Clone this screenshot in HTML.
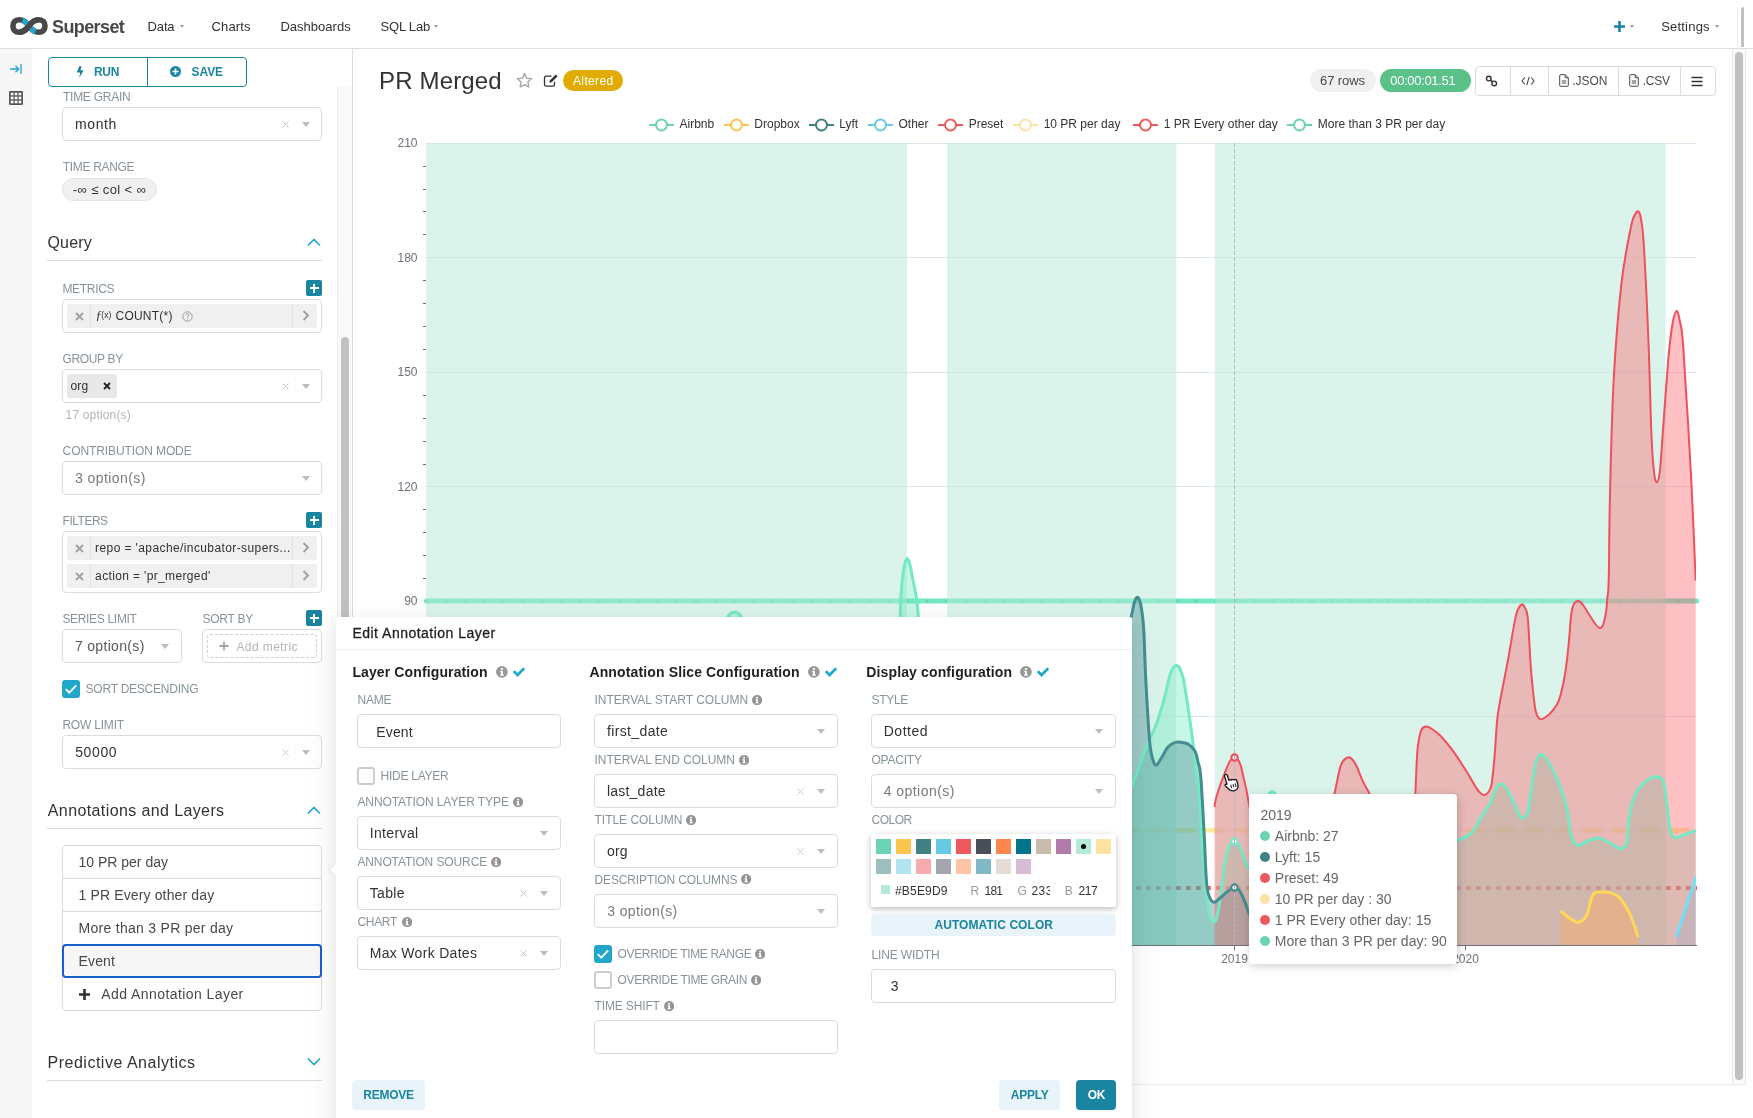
<!DOCTYPE html>
<html lang="en">
<head>
<meta charset="utf-8">
<title>Superset - PR Merged</title>
<style>
*{box-sizing:border-box;margin:0;padding:0}
html,body{width:1753px;height:1118px;overflow:hidden;background:#fff}
body{font-family:"Liberation Sans",sans-serif;color:#323232;position:relative;font-size:14px}
#app{position:absolute;left:0;top:0;width:1753px;height:1118px;overflow:hidden;will-change:transform}
.abs{position:absolute}
.t{position:absolute;white-space:nowrap;line-height:20px}
/* nav */
#nav{position:absolute;left:0;top:0;width:1753px;height:49px;background:#fff;border-bottom:1px solid #dedede}
#nav .t{font-size:14px;color:#323232;top:19px;letter-spacing:.25px}
.caret{position:absolute;width:0;height:0;border-left:2.8px solid transparent;border-right:2.8px solid transparent;border-top:3.4px solid #a0a0a0}
/* strip */
#strip{position:absolute;left:0;top:49px;width:32px;height:1069px;background:#f7f7f7}
/* sidebar */
#side{position:absolute;left:32px;top:49px;width:320px;height:1069px;background:#fff}
#vdiv{position:absolute;left:352px;top:49px;width:1px;height:1069px;background:#dcdcdc}
.lbl{position:absolute;white-space:nowrap;font-size:12px;line-height:1;color:#879399;letter-spacing:.35px;text-transform:uppercase}
.sel{position:absolute;border:1px solid #dcdcdc;border-radius:4px;background:#fff}
.sel .v{position:absolute;left:12px;top:0;height:100%;display:flex;align-items:center;font-size:14px;color:#323232;white-space:nowrap;letter-spacing:.3px}
.sel .ph{color:#808080}
.sel .arr{position:absolute;right:11px;top:50%;margin-top:-2px;width:0;height:0;border-left:4.5px solid transparent;border-right:4.5px solid transparent;border-top:5px solid #bdbdbd}
.sel .x{position:absolute;right:31px;top:50%;width:9px;height:9px;margin-top:-4px}
.sech{position:absolute;left:47px;font-size:16px;line-height:1;color:#323232;white-space:nowrap;letter-spacing:.35px}
.hr{position:absolute;left:47px;width:275px;height:1px;background:#dcdcdc}
.plus{position:absolute;width:15px;height:15px;border-radius:2px;background:#1a85a0}
.plus:before{content:"";position:absolute;left:3.5px;top:7.2px;width:9px;height:1.6px;background:#fff}
.plus:after{content:"";position:absolute;left:7.2px;top:3.5px;width:1.6px;height:9px;background:#fff}
.chip{position:absolute;left:67px;width:250px;height:24px;background:#f0f0f0;border-radius:3px}
.chip .cx{position:absolute;left:0;top:0;width:24px;height:24px;border-right:1px solid #e2e2e2}
.chip .cr{position:absolute;right:0;top:0;width:25px;height:24px;border-left:1px solid #e2e2e2}
.chip .ct{position:absolute;left:28px;top:0;height:23px;display:flex;align-items:center;font-size:12.5px;color:#323232;white-space:nowrap;letter-spacing:.3px}
.chk{position:absolute;width:17px;height:17px;border-radius:2px}
.chk.on{background:#1a85a0;border:1px solid #1a85a0}
.chk.off{background:#fff;border:1px solid #9e9e9e}
.li{position:absolute;left:62px;width:260px;height:34px;border:1px solid #dcdcdc;background:#fff;font-size:14.5px;color:#484848;padding-left:15px;display:flex;align-items:center;white-space:nowrap;letter-spacing:.3px}
</style>
</head>
<body>
<div id="app">
<!-- NAV -->
<div id="nav">
<svg class="abs" style="left:9px;top:16px" width="40" height="20" viewBox="0 0 40 20" fill="none" stroke-width="5.600">
<path d="M19.970 10C17.100 6 14.600 3.750 10.100 3.750C6.200 3.750 3.940 6.400 3.940 10C3.940 13.600 6.200 16.250 10.100 16.250C14.600 16.250 17.100 14 19.970 10C22.800 6 25.300 3.750 29.800 3.750C33.700 3.750 36 6.400 36 10C36 13.600 33.700 16.250 29.800 16.250C25.300 16.250 22.800 14 19.970 10Z" stroke="#484848"/>
<path d="M10.100 3.750C14.600 3.750 17.100 6 19.970 10C22.800 14 25.300 16.250 29.800 16.250" stroke="#20a7c9" pathLength="100" stroke-dasharray="0 14 72 14"/>
<path d="M10.100 16.250C14.600 16.250 17.100 14 19.970 10C22.800 6 25.300 3.750 29.800 3.750" stroke="#484848"/>
</svg>





<svg class="abs" style="left:1614px;top:21px" width="11" height="11" viewBox="0 0 11 11"><path d="M4.200 0h2.600v4.200H11v2.600H6.800V11H4.200V6.800H0V4.200h4.200z" fill="#1a85a0"/></svg>


<div class="abs" style="left:1737px;top:7px;width:1px;height:40px;background:#ececec"></div>
<div class="abs" style="left:1741px;top:7px;width:3px;height:40px;background:#c1c1c1;border-radius:3px 0 0 0"></div>
</div>
<!-- STRIP -->
<div id="strip">
<svg class="abs" style="left:9px;top:13px" width="14" height="14" viewBox="0 0 14 14" fill="none" stroke="#20a7c9" stroke-width="1.300"><path d="M1 7h8.500M6.500 3.800L9.700 7l-3.200 3.200M12 2v10"/></svg>
<svg class="abs" style="left:9px;top:42px" width="14" height="14" viewBox="0 0 14 14"><rect x="0" y="0" width="14" height="14" rx="1.200" fill="#555"/><g fill="#f7f7f7"><rect x="1.700" y="1.700" width="2.800" height="2.600"/><rect x="5.700" y="1.700" width="2.700" height="2.600"/><rect x="9.600" y="1.700" width="2.700" height="2.600"/><rect x="1.700" y="5.600" width="2.800" height="2.700"/><rect x="5.700" y="5.600" width="2.700" height="2.700"/><rect x="9.600" y="5.600" width="2.700" height="2.700"/><rect x="1.700" y="9.600" width="2.800" height="2.700"/><rect x="5.700" y="9.600" width="2.700" height="2.700"/><rect x="9.600" y="9.600" width="2.700" height="2.700"/></g></svg>
</div>

<div class="t" style="left:52px;top:17px;font-size:18px;font-weight:bold;color:#484848;letter-spacing:-0.604px;">Superset</div>
<div class="t" style="left:147.6px;top:17px;font-size:13px;color:#323232;letter-spacing:-0.167px;">Data</div>
<div class="t" style="left:211.6px;top:17px;font-size:13px;color:#323232;letter-spacing:0.101px;">Charts</div>
<div class="t" style="left:280.4px;top:17px;font-size:13px;color:#323232;letter-spacing:0.019px;">Dashboards</div>
<div class="t" style="left:380.5px;top:17px;font-size:13px;color:#323232;letter-spacing:-0.192px;">SQL Lab</div>
<div class="t" style="left:1661.2px;top:17px;font-size:13px;color:#323232;letter-spacing:0.202px;">Settings</div>
<div class="caret" style="left:179.7px;top:24.6px;border-top-color:#9a9a9a"></div>
<div class="caret" style="left:433.9px;top:24.6px;border-top-color:#9a9a9a"></div>
<div class="caret" style="left:1629.6px;top:24.6px;border-top-color:#9a9a9a"></div>
<div class="caret" style="left:1714.5px;top:24.6px;border-top-color:#9a9a9a"></div>
<div id="side"></div><div id="vdiv"></div>
<div class="abs" style="left:337px;top:87px;width:15px;height:1031px;background:#fafafa;border-left:1px solid #ececec"></div>
<div class="abs" style="left:341px;top:337px;width:8px;height:300px;background:#c1c1c1;border-radius:4px"></div>
<div class="abs" style="left:48px;top:57px;width:199px;height:30px;border:1px solid #1a85a0;border-radius:4px;background:#fff"></div><div class="abs" style="left:147px;top:57px;width:1px;height:30px;background:#1a85a0"></div>
<svg class="abs" style="left:76px;top:66px" width="8" height="12" viewBox="0 0 8 12"><path d="M3.200 0.300L5.600 0.300 4.500 4.300 7.600 4.300 3.300 11.800 4.100 6.600 0.800 6.600Z" fill="#1a85a0"/></svg>
<div class="t" style="left:94px;top:62px;font-size:12px;font-weight:bold;color:#1a85a0;letter-spacing:-0.333px;">RUN</div>
<svg class="abs" style="left:170px;top:66px" width="11" height="11" viewBox="0 0 11 11"><circle cx="5.500" cy="5.500" r="5.500" fill="#1a85a0"/><path d="M4.700 2.400h1.600v2.300h2.300v1.600H6.300v2.300H4.700V6.300H2.400V4.700h2.300z" fill="#fff"/></svg>
<div class="t" style="left:191.5px;top:62px;font-size:12px;font-weight:bold;color:#1a85a0;letter-spacing:-0.074px;">SAVE</div>
<div class="t" style="left:63px;top:87px;font-size:12px;color:#879399;letter-spacing:-0.262px;">TIME GRAIN</div>
<div class="sel" style="left:62px;top:107px;width:260px;height:34px"><div class="arr"></div><svg class="x" viewBox="0 0 9 9"><path d="M1.500 1.500l6 6M7.500 1.500l-6 6" stroke="#c8c8c8" stroke-width="1" fill="none"/></svg></div>
<div class="t" style="left:75px;top:114px;font-size:14px;color:#323232;letter-spacing:0.616px;">month</div>
<div class="t" style="left:62.8px;top:157px;font-size:12px;color:#879399;letter-spacing:-0.327px;">TIME RANGE</div>
<div class="abs" style="left:62px;top:178px;width:95px;height:23px;border-radius:12px;background:#f0f0f0;border:1px solid #e4e4e4"></div>
<div class="t" style="left:72.8px;top:180px;font-size:13px;font-family:'Liberation Sans','DejaVu Sans',sans-serif;color:#323232;letter-spacing:0.404px;">-∞ ≤ col &lt; ∞</div>
<div class="t" style="left:47.5px;top:233px;font-size:16px;color:#323232;letter-spacing:0.164px;">Query</div>
<svg class="abs" style="left:307px;top:238px" width="14" height="9" viewBox="0 0 14 9"><path d="M1 7.500L7 1.500l6 6" fill="none" stroke="#20a7c9" stroke-width="1.600"/></svg>
<div class="hr" style="top:260px"></div>
<div class="t" style="left:62.4px;top:279px;font-size:12px;color:#879399;letter-spacing:-0.3px;">METRICS</div>
<div class="plus" style="left:306px;top:280px;width:16px;height:16px"></div>
<div class="sel" style="left:62px;top:299px;width:260px;height:34px"></div>
<div class="chip" style="top:304px"><div class="cx"><svg class="abs" style="left:7.500px;top:7.500px" width="9" height="9" viewBox="0 0 9 9"><path d="M1 1l7 7M8 1l-7 7" stroke="#a0a0a0" stroke-width="1.800" fill="none"/></svg></div><div class="cr"><svg class="abs" style="left:8.500px;top:6px" width="8" height="11" viewBox="0 0 8 11"><path d="M1.500 1l4.500 4.500L1.500 10" stroke="#a0a0a0" stroke-width="1.900" fill="none"/></svg></div></div>
<div class="t" style="left:95.5px;top:305px;font-size:13px;color:#323232;font-style:italic;font-family:'Liberation Serif',serif;">ƒ</div>
<div class="t" style="left:101.3px;top:305px;font-size:8.5px;color:#323232;">(x)</div>
<div class="t" style="left:115.5px;top:306px;font-size:12px;color:#323232;letter-spacing:0.234px;">COUNT(*)</div>
<svg class="abs" style="left:182px;top:310.500px" width="11" height="11" viewBox="0 0 11 11"><circle cx="5.500" cy="5.500" r="4.700" fill="none" stroke="#9a9a9a" stroke-width="1"/><path d="M4 4.300c0-1 .7-1.500 1.500-1.500s1.500.5 1.500 1.300c0 1-1.400 1.100-1.400 2.300" fill="none" stroke="#9a9a9a" stroke-width="1"/><rect x="5" y="7.300" width="1.100" height="1.100" fill="#9a9a9a"/></svg>
<div class="t" style="left:62.4px;top:349px;font-size:12px;color:#879399;letter-spacing:-0.33px;">GROUP BY</div>
<div class="sel" style="left:62px;top:369px;width:260px;height:34px"><div class="arr"></div><svg class="x" viewBox="0 0 9 9"><path d="M1.500 1.500l6 6M7.500 1.500l-6 6" stroke="#c8c8c8" stroke-width="1" fill="none"/></svg></div>
<div class="abs" style="left:67px;top:374px;width:50px;height:24px;background:#e8e8e8;border-radius:2px"></div>
<div class="t" style="left:70.4px;top:376px;font-size:12px;color:#323232;letter-spacing:0.219px;">org</div>
<svg class="abs" style="left:103px;top:382px" width="8" height="8" viewBox="0 0 8 8"><path d="M1 1l6 6M7 1l-6 6" stroke="#222" stroke-width="1.800" fill="none"/></svg>
<div class="t" style="left:65.6px;top:405px;font-size:12px;color:#b4b4b4;letter-spacing:0.16px;">17 option(s)</div>
<div class="t" style="left:62.6px;top:441px;font-size:12px;color:#879399;letter-spacing:-0.098px;">CONTRIBUTION MODE</div>
<div class="sel" style="left:62px;top:461px;width:260px;height:34px"><div class="arr"></div></div>
<div class="t" style="left:75.1px;top:468px;font-size:14px;color:#7a7a7a;letter-spacing:0.413px;">3 option(s)</div>
<div class="t" style="left:62.6px;top:511px;font-size:12px;color:#879399;letter-spacing:-0.493px;">FILTERS</div>
<div class="plus" style="left:306px;top:512px;width:16px;height:16px"></div>
<div class="sel" style="left:62px;top:531px;width:260px;height:62px"></div>
<div class="chip" style="top:536px"><div class="cx"><svg class="abs" style="left:7.500px;top:7.500px" width="9" height="9" viewBox="0 0 9 9"><path d="M1 1l7 7M8 1l-7 7" stroke="#a0a0a0" stroke-width="1.800" fill="none"/></svg></div><div class="cr"><svg class="abs" style="left:8.500px;top:6px" width="8" height="11" viewBox="0 0 8 11"><path d="M1.500 1l4.500 4.500L1.500 10" stroke="#a0a0a0" stroke-width="1.900" fill="none"/></svg></div></div>
<div class="chip" style="top:564px"><div class="cx"><svg class="abs" style="left:7.500px;top:7.500px" width="9" height="9" viewBox="0 0 9 9"><path d="M1 1l7 7M8 1l-7 7" stroke="#a0a0a0" stroke-width="1.800" fill="none"/></svg></div><div class="cr"><svg class="abs" style="left:8.500px;top:6px" width="8" height="11" viewBox="0 0 8 11"><path d="M1.500 1l4.500 4.500L1.500 10" stroke="#a0a0a0" stroke-width="1.900" fill="none"/></svg></div></div>
<div class="t" style="left:95.1px;top:538px;font-size:12px;color:#323232;letter-spacing:0.398px;">repo = 'apache/incubator-supers...</div>
<div class="t" style="left:95.1px;top:566px;font-size:12px;color:#323232;letter-spacing:0.359px;">action = 'pr_merged'</div>
<div class="t" style="left:62.4px;top:609px;font-size:12px;color:#879399;letter-spacing:-0.319px;">SERIES LIMIT</div>
<div class="t" style="left:202.4px;top:609px;font-size:12px;color:#879399;letter-spacing:-0.25px;">SORT BY</div>
<div class="plus" style="left:306px;top:610px;width:16px;height:16px"></div>
<div class="sel" style="left:62px;top:629px;width:120px;height:34px"><div class="arr" style="right:12.500px"></div></div>
<div class="t" style="left:74.9px;top:636px;font-size:14px;color:#5a5a5a;letter-spacing:0.331px;">7 option(s)</div>
<div class="sel" style="left:202px;top:629px;width:120px;height:34px"></div>
<div class="abs" style="left:207px;top:634px;width:110px;height:24px;border:1px dashed #cfcfcf;border-radius:3px"></div>
<svg class="abs" style="left:219px;top:641px" width="10" height="10" viewBox="0 0 10 10"><path d="M5 0.500v9M0.500 5h9" stroke="#8a8a8a" stroke-width="1.300"/></svg>
<div class="t" style="left:236.4px;top:637px;font-size:12px;color:#b4b4b4;letter-spacing:0.424px;">Add metric</div>
<div class="abs" style="left:62px;top:680px;width:18px;height:18px;border-radius:3px;background:#20a7c9"><svg class="abs" style="left:0;top:0" width="18" height="18" viewBox="0 0 18 18"><path d="M3.800 9.200l3.500 3.500 6.900-7.400" fill="none" stroke="#fff" stroke-width="1.900"/></svg></div>
<div class="t" style="left:85.6px;top:679px;font-size:12px;color:#879399;letter-spacing:-0.237px;">SORT DESCENDING</div>
<div class="t" style="left:62.4px;top:715px;font-size:12px;color:#879399;letter-spacing:-0.203px;">ROW LIMIT</div>
<div class="sel" style="left:62px;top:735px;width:260px;height:34px"><div class="arr"></div><svg class="x" viewBox="0 0 9 9"><path d="M1.500 1.500l6 6M7.500 1.500l-6 6" stroke="#c8c8c8" stroke-width="1" fill="none"/></svg></div>
<div class="t" style="left:75.2px;top:742px;font-size:14px;color:#323232;letter-spacing:0.633px;">50000</div>
<div class="t" style="left:47.8px;top:801px;font-size:16px;color:#323232;letter-spacing:0.39px;">Annotations and Layers</div>
<svg class="abs" style="left:307px;top:806px" width="14" height="9" viewBox="0 0 14 9"><path d="M1 7.500L7 1.500l6 6" fill="none" stroke="#20a7c9" stroke-width="1.600"/></svg>
<div class="hr" style="top:828px"></div>
<div class="abs" style="left:62px;top:845px;width:260px;height:166px;border:1px solid #dcdcdc;border-radius:4px;background:#fff"></div>
<div class="abs" style="left:62px;top:878px;width:260px;height:1px;background:#dcdcdc"></div>
<div class="abs" style="left:62px;top:911px;width:260px;height:1px;background:#dcdcdc"></div>
<div class="abs" style="left:62px;top:944px;width:260px;height:34px;border:2px solid #1a5fd0;border-radius:4px;background:#f7f7f7"></div>
<div class="t" style="left:78.5px;top:852px;font-size:14px;color:#484848;letter-spacing:0px;">10 PR per day</div>
<div class="t" style="left:78.5px;top:885px;font-size:14px;color:#484848;letter-spacing:0.137px;">1 PR Every other day</div>
<div class="t" style="left:78.5px;top:918px;font-size:14px;color:#484848;letter-spacing:0.285px;">More than 3 PR per day</div>
<div class="t" style="left:78.5px;top:951px;font-size:14px;color:#484848;letter-spacing:0.158px;">Event</div>
<svg class="abs" style="left:78.500px;top:988.500px" width="11" height="11" viewBox="0 0 11 11"><path d="M4.200 0h2.600v4.200H11v2.600H6.800V11H4.200V6.800H0V4.200h4.200z" fill="#323232"/></svg>
<div class="t" style="left:101.3px;top:984px;font-size:14px;color:#484848;letter-spacing:0.425px;">Add Annotation Layer</div>
<div class="t" style="left:47.5px;top:1053px;font-size:16px;color:#323232;letter-spacing:0.508px;">Predictive Analytics</div>
<svg class="abs" style="left:307px;top:1057px" width="14" height="9" viewBox="0 0 14 9"><path d="M1 1.500l6 6 6-6" fill="none" stroke="#20a7c9" stroke-width="1.600"/></svg>
<div class="hr" style="top:1080px"></div>
<svg class="abs" style="left:0;top:0" width="1753" height="1118" viewBox="0 0 1753 1118" font-family="'Liberation Sans',sans-serif" font-size="12">
<defs><clipPath id="plot"><rect x="426" y="100" width="1270" height="846"/></clipPath></defs>
<path d="M426 143.5H1696" stroke="#e0e6f1" stroke-width="1" fill="none"/>
<path d="M426 257.5H1696" stroke="#e0e6f1" stroke-width="1" fill="none"/>
<path d="M426 372.5H1696" stroke="#e0e6f1" stroke-width="1" fill="none"/>
<path d="M426 486.5H1696" stroke="#e0e6f1" stroke-width="1" fill="none"/>
<path d="M426 601.5H1696" stroke="#e0e6f1" stroke-width="1" fill="none"/>
<path d="M426 716.5H1696" stroke="#e0e6f1" stroke-width="1" fill="none"/>
<path d="M426 830.5H1696" stroke="#e0e6f1" stroke-width="1" fill="none"/>
<path d="M421.800 830.2H1697" stroke="#fdeea2" stroke-width="5" stroke-dasharray="20 9" fill="none" clip-path="url(#plot)"/>
<path d="M426 888.0H1697" stroke="#ee5960" stroke-width="4.200" stroke-dasharray="4.800 5.200" fill="none"/>
<path d="M426.500 600.9H1696.500" stroke="#75e8c4" stroke-width="5" fill="none" stroke-linecap="round"/>
<path d="M426.500 600.9H1697" stroke="#3fae8c" stroke-opacity="0.28" stroke-width="3.400" stroke-dasharray="0 19.250" fill="none" stroke-linecap="round"/>
<rect x="426" y="143" width="481" height="802" fill="#b5e9d9" fill-opacity="0.5"/>
<rect x="947" y="143" width="229.2" height="802" fill="#b5e9d9" fill-opacity="0.5"/>
<rect x="1215" y="143" width="450.7" height="802" fill="#b5e9d9" fill-opacity="0.5"/>
<g clip-path="url(#plot)">
<path d="M697.0 655.0C700.2 653.8 711.7 652.2 716.0 648.0C720.3 643.8 721.1 635.1 723.0 630.0C724.9 624.9 726.2 620.3 727.5 617.5C728.8 614.7 729.8 614.2 731.0 613.3C732.2 612.4 733.8 612.0 735.0 612.0C736.2 612.0 737.4 612.4 738.5 613.3C739.6 614.2 740.2 614.7 741.5 617.5C742.8 620.3 743.9 624.9 746.0 630.0C748.1 635.1 749.5 643.8 754.0 648.0C758.5 652.2 769.8 653.8 773.0 655.0L773.0 945L697.0 945Z" fill="#75e8c4" fill-opacity="0.4"/>
<path d="M880.0 655.0C883.1 654.2 895.4 656.3 898.8 650.0C902.2 643.7 899.9 625.3 900.2 617.0C900.5 608.7 900.3 606.5 900.7 600.0C901.1 593.5 901.8 584.1 902.5 578.0C903.2 571.9 904.0 566.8 904.8 563.5C905.6 560.2 906.4 558.5 907.2 558.5C908.0 558.5 908.8 560.8 909.6 563.5C910.4 566.2 910.8 568.9 912.0 575.0C913.2 581.1 915.8 593.0 916.8 600.0C917.8 607.0 917.8 608.7 918.3 617.0C918.8 625.3 916.2 643.7 919.5 650.0C922.8 656.3 934.9 654.2 938.0 655.0L938.0 945L880.0 945Z" fill="#75e8c4" fill-opacity="0.4"/>
<path d="M1113.0 830.0C1115.2 825.0 1122.8 807.2 1126.0 800.0C1129.2 792.8 1128.9 794.9 1132.0 786.7C1135.1 778.5 1140.6 761.5 1144.7 751.0C1148.8 740.5 1153.2 732.5 1156.5 723.7C1159.8 714.9 1162.2 706.1 1164.4 698.0C1166.7 689.9 1168.7 679.8 1170.0 675.0C1171.3 670.2 1171.5 670.9 1172.2 669.5C1172.9 668.1 1173.6 667.1 1174.3 666.5C1175.0 665.9 1175.8 665.5 1176.6 665.6C1177.4 665.7 1178.2 665.9 1179.0 667.0C1179.8 668.1 1180.5 669.5 1181.3 672.0C1182.1 674.5 1182.7 675.0 1184.0 682.0C1185.3 689.0 1187.5 703.8 1189.0 714.0C1190.5 724.2 1191.7 732.5 1193.0 743.0C1194.3 753.5 1195.8 767.5 1196.9 777.0C1198.0 786.5 1199.0 791.0 1199.8 800.0C1200.6 809.0 1200.5 815.9 1201.5 831.0C1202.5 846.1 1204.5 877.2 1205.7 890.4C1206.9 903.6 1207.6 905.3 1208.5 910.0C1209.4 914.7 1210.0 916.5 1211.0 918.5C1212.0 920.5 1213.2 922.1 1214.2 921.9C1215.2 921.6 1216.0 920.8 1217.0 917.0C1218.0 913.2 1218.7 908.2 1220.1 899.0C1221.5 889.8 1223.6 870.3 1225.2 861.5C1226.8 852.7 1227.9 849.4 1229.5 846.0C1231.1 842.6 1232.9 841.2 1234.6 841.2C1236.3 841.2 1238.0 843.2 1239.5 846.0C1241.0 848.8 1242.4 854.3 1243.9 858.0C1245.4 861.7 1247.0 867.0 1248.5 868.3C1250.0 869.6 1251.4 869.0 1253.0 866.0C1254.6 863.0 1256.0 860.2 1258.0 850.0C1260.0 839.8 1262.6 814.7 1265.0 805.0C1267.4 795.3 1269.7 791.6 1272.2 791.6C1274.7 791.6 1277.0 795.3 1280.0 805.0C1283.0 814.7 1285.0 837.5 1290.0 850.0C1295.0 862.5 1300.0 878.0 1310.0 880.0C1320.0 882.0 1335.0 866.7 1350.0 862.0C1365.0 857.3 1385.0 854.7 1400.0 852.0C1415.0 849.3 1430.5 847.9 1440.0 846.0C1449.5 844.1 1452.0 842.9 1457.3 840.7C1462.6 838.5 1467.7 836.3 1471.6 832.6C1475.5 828.9 1477.5 823.1 1480.5 818.3C1483.5 813.5 1486.8 809.1 1489.5 804.0C1492.2 798.9 1494.4 791.2 1496.6 787.9C1498.8 784.6 1500.5 782.8 1502.9 784.3C1505.3 785.8 1508.5 792.0 1511.0 796.8C1513.5 801.6 1516.2 809.4 1518.1 813.0C1520.0 816.6 1520.9 818.6 1522.6 818.3C1524.2 818.0 1526.5 816.1 1528.0 811.0C1529.5 805.9 1530.5 794.7 1531.5 787.9C1532.5 781.1 1533.2 775.0 1534.2 770.0C1535.2 765.0 1536.2 760.6 1537.5 758.0C1538.8 755.4 1540.1 753.9 1541.7 754.2C1543.3 754.5 1545.2 757.4 1547.0 760.0C1548.8 762.6 1550.4 765.3 1552.7 770.0C1555.0 774.7 1558.3 781.4 1560.7 788.0C1563.1 794.6 1565.3 802.0 1567.0 809.4C1568.7 816.8 1569.4 827.2 1570.6 832.6C1571.8 838.0 1572.7 839.9 1574.0 842.0C1575.3 844.1 1576.3 845.4 1578.6 845.2C1580.9 845.0 1584.7 842.2 1588.0 841.0C1591.3 839.8 1594.8 837.8 1598.3 838.0C1601.8 838.2 1605.4 840.7 1609.0 842.5C1612.6 844.3 1617.3 848.0 1619.8 848.7C1622.3 849.5 1622.8 848.2 1624.0 847.0C1625.2 845.8 1626.1 847.0 1627.0 841.6C1627.9 836.2 1628.1 822.8 1629.6 814.7C1631.1 806.7 1633.1 799.0 1635.9 793.3C1638.7 787.6 1643.0 783.5 1646.6 780.7C1650.2 778.0 1654.6 776.5 1657.4 776.8C1660.2 777.1 1662.0 777.7 1663.6 782.5C1665.2 787.3 1666.2 798.0 1667.2 805.8C1668.2 813.5 1669.0 824.0 1669.9 829.0C1670.8 834.0 1671.5 834.5 1672.5 836.0C1673.5 837.5 1673.7 838.1 1676.2 837.7C1678.8 837.3 1684.5 834.7 1687.8 833.5C1691.1 832.3 1694.6 831.0 1695.9 830.5L1695.9 945L1113.0 945Z" fill="#75e8c4" fill-opacity="0.4"/>
<path d="M1560.7 911.0C1561.9 912.0 1565.6 915.2 1568.0 917.0C1570.4 918.8 1573.1 920.7 1575.0 921.5C1576.9 922.3 1578.0 922.4 1579.5 922.0C1581.0 921.6 1582.7 920.5 1584.0 919.0C1585.3 917.5 1586.4 916.4 1587.6 913.0C1588.8 909.6 1590.2 902.1 1591.2 898.9C1592.2 895.7 1592.6 895.1 1593.5 894.0C1594.4 892.9 1594.9 892.5 1596.5 892.2C1598.1 891.9 1600.9 891.9 1603.0 892.0C1605.1 892.1 1607.1 892.2 1609.0 892.6C1610.9 893.0 1612.7 893.6 1614.5 894.5C1616.3 895.4 1617.4 895.2 1619.8 898.0C1622.2 900.8 1626.2 906.5 1628.7 911.4C1631.2 916.3 1633.5 923.2 1635.0 927.5C1636.5 931.8 1637.5 935.7 1638.0 937.3L1638.0 945L1560.7 945Z" fill="#ffd858" fill-opacity="0.4"/>
<path d="M1118.0 700.0C1119.3 690.0 1123.7 654.4 1126.0 640.0C1128.3 625.6 1130.6 619.8 1132.0 613.5C1133.4 607.2 1133.5 604.7 1134.5 602.0C1135.5 599.3 1136.7 596.6 1137.8 597.3C1138.9 598.0 1140.0 600.7 1141.0 606.0C1142.0 611.3 1142.9 617.0 1143.7 629.0C1144.5 641.0 1144.7 659.3 1145.7 678.0C1146.7 696.7 1148.4 727.3 1149.6 741.0C1150.8 754.7 1151.8 756.0 1153.0 760.0C1154.2 764.0 1155.0 765.5 1156.5 765.0C1158.0 764.5 1160.1 760.0 1162.0 757.0C1163.9 754.0 1165.8 749.4 1168.0 747.0C1170.2 744.6 1172.9 743.1 1175.2 742.4C1177.5 741.6 1179.9 742.2 1182.0 742.5C1184.1 742.8 1185.8 742.6 1188.0 744.0C1190.2 745.4 1193.2 748.0 1194.9 751.0C1196.6 754.0 1197.0 757.7 1198.0 762.0C1199.0 766.3 1199.8 765.5 1200.8 777.0C1201.8 788.5 1203.0 813.5 1204.0 831.0C1205.0 848.5 1205.6 871.0 1206.5 882.0C1207.4 893.0 1208.2 893.6 1209.5 897.0C1210.8 900.4 1212.5 902.1 1214.2 902.3C1216.0 902.5 1217.9 899.7 1220.0 898.0C1222.1 896.3 1224.6 893.8 1227.0 892.0C1229.4 890.2 1232.7 887.8 1234.6 887.4C1236.5 887.0 1237.2 888.1 1238.5 889.5C1239.8 890.9 1240.5 891.8 1242.2 895.5C1243.9 899.2 1246.7 906.8 1248.5 911.7C1250.3 916.6 1251.1 920.3 1253.0 925.0C1254.9 929.7 1256.8 936.7 1260.0 940.0C1263.2 943.3 1270.0 944.2 1272.0 945.0L1272.0 945L1118.0 945Z" fill="#468d91" fill-opacity="0.4"/>
<path d="M1676.2 937.3C1679.5 927.2 1692.6 886.9 1695.9 876.8L1695.9 945L1676.2 945Z" fill="#70dff8" fill-opacity="0.4"/>
<path d="M1214.5 807.0C1214.7 805.8 1214.8 803.3 1215.6 800.0C1216.4 796.7 1218.1 791.2 1219.5 787.0C1220.9 782.8 1222.8 778.2 1224.2 774.5C1225.6 770.8 1227.0 767.2 1228.1 764.7C1229.2 762.2 1230.0 760.8 1231.0 759.5C1232.0 758.2 1233.2 757.1 1234.3 757.0C1235.4 756.9 1236.5 757.7 1237.5 759.0C1238.5 760.3 1239.5 762.1 1240.4 764.7C1241.3 767.3 1242.0 770.6 1242.9 774.5C1243.8 778.4 1245.1 783.8 1246.0 788.0C1246.9 792.2 1247.3 794.7 1248.3 800.0C1249.3 805.3 1249.7 808.3 1252.0 820.0C1254.3 831.7 1258.5 856.7 1262.0 870.0C1265.5 883.3 1268.0 894.2 1273.0 900.0C1278.0 905.8 1285.7 908.3 1292.0 905.0C1298.3 901.7 1305.5 891.7 1311.0 880.0C1316.5 868.3 1321.1 849.4 1325.0 835.0C1328.9 820.6 1332.0 805.0 1334.5 793.7C1337.0 782.4 1338.6 772.9 1340.2 767.3C1341.8 761.7 1342.6 761.7 1344.0 760.0C1345.4 758.3 1347.3 757.2 1348.8 757.2C1350.3 757.2 1351.8 758.6 1353.2 760.3C1354.6 762.0 1355.8 764.4 1357.2 767.5C1358.6 770.6 1360.3 775.5 1361.7 778.7C1363.1 781.9 1364.3 784.0 1365.6 786.5C1366.9 789.0 1367.9 790.5 1369.5 793.7C1371.1 797.0 1372.8 799.1 1375.0 806.0C1377.2 812.9 1380.2 824.3 1383.0 835.0C1385.8 845.7 1388.3 862.5 1392.0 870.0C1395.7 877.5 1401.7 883.3 1405.0 880.0C1408.3 876.7 1410.3 864.4 1412.0 850.0C1413.7 835.6 1414.4 810.4 1415.3 793.7C1416.2 777.0 1416.5 760.5 1417.5 750.0C1418.5 739.5 1419.6 734.7 1421.0 730.8C1422.4 726.9 1424.2 726.8 1426.0 726.5C1427.8 726.2 1429.6 727.5 1432.0 729.0C1434.4 730.5 1436.9 732.1 1440.4 735.8C1443.9 739.5 1449.0 745.7 1453.1 751.2C1457.2 756.7 1461.0 762.8 1465.0 769.0C1469.0 775.2 1474.1 784.5 1476.8 788.6C1479.5 792.7 1479.7 792.4 1481.0 793.5C1482.3 794.6 1483.4 795.2 1484.6 795.0C1485.8 794.8 1486.8 794.2 1488.0 792.5C1489.2 790.8 1490.4 790.6 1491.5 784.7C1492.6 778.8 1493.5 768.1 1494.5 757.0C1495.5 745.9 1496.2 728.3 1497.4 717.8C1498.6 707.3 1499.6 703.9 1501.4 694.0C1503.2 684.1 1505.9 671.1 1508.2 658.7C1510.5 646.3 1513.4 627.8 1515.1 619.4C1516.8 611.0 1517.3 611.0 1518.5 608.5C1519.7 606.0 1520.9 604.7 1522.0 604.6C1523.1 604.5 1524.0 605.5 1525.0 608.0C1526.0 610.5 1526.9 609.3 1527.9 619.4C1528.9 629.5 1529.8 654.2 1530.9 668.6C1532.1 683.0 1533.7 698.1 1534.8 706.0C1535.9 713.9 1536.5 713.8 1537.5 716.0C1538.5 718.2 1539.5 719.0 1540.7 719.3C1542.0 719.5 1543.2 718.7 1545.0 717.5C1546.8 716.3 1549.2 714.8 1551.5 711.9C1553.8 709.0 1556.7 706.5 1559.0 700.0C1561.3 693.5 1563.6 682.6 1565.2 673.0C1566.8 663.4 1567.8 652.7 1568.8 642.6C1569.8 632.5 1570.5 618.8 1571.5 612.2C1572.5 605.6 1573.3 604.9 1574.5 603.0C1575.7 601.1 1577.2 600.7 1578.6 601.0C1580.0 601.3 1581.2 602.7 1583.0 605.0C1584.8 607.3 1587.4 611.9 1589.4 615.0C1591.4 618.1 1593.3 621.3 1595.0 623.5C1596.7 625.7 1598.5 627.6 1599.8 628.0C1601.0 628.4 1601.7 627.4 1602.5 626.0C1603.3 624.6 1604.0 622.1 1604.6 619.4C1605.2 616.7 1605.8 613.6 1606.3 610.0C1606.8 606.4 1606.9 603.0 1607.3 598.0C1607.7 593.0 1608.2 597.9 1608.7 580.0C1609.2 562.1 1609.2 524.2 1610.1 490.5C1610.9 456.8 1611.9 412.2 1613.8 377.8C1615.7 343.4 1618.6 308.9 1621.4 283.9C1624.2 258.9 1628.5 239.2 1630.8 227.6C1633.1 216.0 1633.8 217.2 1635.0 214.5C1636.2 211.8 1637.3 210.7 1638.3 211.4C1639.3 212.2 1640.1 213.2 1641.0 219.0C1641.9 224.8 1642.7 226.1 1643.9 246.3C1645.1 266.5 1647.2 308.9 1648.4 340.2C1649.7 371.5 1650.5 412.0 1651.4 434.0C1652.3 456.0 1653.1 464.0 1654.0 472.0C1654.9 480.0 1656.0 482.5 1657.0 482.2C1658.0 481.9 1659.0 478.0 1660.0 470.0C1661.0 462.0 1661.3 452.5 1662.7 434.0C1664.1 415.5 1666.7 377.3 1668.3 359.0C1669.9 340.7 1671.1 332.0 1672.5 324.0C1673.9 316.0 1675.3 311.3 1676.6 311.0C1677.8 310.7 1678.9 315.9 1680.0 322.0C1681.1 328.1 1681.5 322.8 1683.3 347.7C1685.1 372.6 1688.7 432.9 1690.8 471.7C1692.9 510.5 1694.9 562.5 1695.7 580.6L1695.7 945L1214.5 945Z" fill="#ff6169" fill-opacity="0.4"/>
<path d="M697.0 655.0C700.2 653.8 711.7 652.2 716.0 648.0C720.3 643.8 721.1 635.1 723.0 630.0C724.9 624.9 726.2 620.3 727.5 617.5C728.8 614.7 729.8 614.2 731.0 613.3C732.2 612.4 733.8 612.0 735.0 612.0C736.2 612.0 737.4 612.4 738.5 613.3C739.6 614.2 740.2 614.7 741.5 617.5C742.8 620.3 743.9 624.9 746.0 630.0C748.1 635.1 749.5 643.8 754.0 648.0C758.5 652.2 769.8 653.8 773.0 655.0" fill="none" stroke="#75e8c4" stroke-width="3" stroke-linejoin="round"/>
<path d="M880.0 655.0C883.1 654.2 895.4 656.3 898.8 650.0C902.2 643.7 899.9 625.3 900.2 617.0C900.5 608.7 900.3 606.5 900.7 600.0C901.1 593.5 901.8 584.1 902.5 578.0C903.2 571.9 904.0 566.8 904.8 563.5C905.6 560.2 906.4 558.5 907.2 558.5C908.0 558.5 908.8 560.8 909.6 563.5C910.4 566.2 910.8 568.9 912.0 575.0C913.2 581.1 915.8 593.0 916.8 600.0C917.8 607.0 917.8 608.7 918.3 617.0C918.8 625.3 916.2 643.7 919.5 650.0C922.8 656.3 934.9 654.2 938.0 655.0" fill="none" stroke="#75e8c4" stroke-width="3" stroke-linejoin="round"/>
<path d="M1113.0 830.0C1115.2 825.0 1122.8 807.2 1126.0 800.0C1129.2 792.8 1128.9 794.9 1132.0 786.7C1135.1 778.5 1140.6 761.5 1144.7 751.0C1148.8 740.5 1153.2 732.5 1156.5 723.7C1159.8 714.9 1162.2 706.1 1164.4 698.0C1166.7 689.9 1168.7 679.8 1170.0 675.0C1171.3 670.2 1171.5 670.9 1172.2 669.5C1172.9 668.1 1173.6 667.1 1174.3 666.5C1175.0 665.9 1175.8 665.5 1176.6 665.6C1177.4 665.7 1178.2 665.9 1179.0 667.0C1179.8 668.1 1180.5 669.5 1181.3 672.0C1182.1 674.5 1182.7 675.0 1184.0 682.0C1185.3 689.0 1187.5 703.8 1189.0 714.0C1190.5 724.2 1191.7 732.5 1193.0 743.0C1194.3 753.5 1195.8 767.5 1196.9 777.0C1198.0 786.5 1199.0 791.0 1199.8 800.0C1200.6 809.0 1200.5 815.9 1201.5 831.0C1202.5 846.1 1204.5 877.2 1205.7 890.4C1206.9 903.6 1207.6 905.3 1208.5 910.0C1209.4 914.7 1210.0 916.5 1211.0 918.5C1212.0 920.5 1213.2 922.1 1214.2 921.9C1215.2 921.6 1216.0 920.8 1217.0 917.0C1218.0 913.2 1218.7 908.2 1220.1 899.0C1221.5 889.8 1223.6 870.3 1225.2 861.5C1226.8 852.7 1227.9 849.4 1229.5 846.0C1231.1 842.6 1232.9 841.2 1234.6 841.2C1236.3 841.2 1238.0 843.2 1239.5 846.0C1241.0 848.8 1242.4 854.3 1243.9 858.0C1245.4 861.7 1247.0 867.0 1248.5 868.3C1250.0 869.6 1251.4 869.0 1253.0 866.0C1254.6 863.0 1256.0 860.2 1258.0 850.0C1260.0 839.8 1262.6 814.7 1265.0 805.0C1267.4 795.3 1269.7 791.6 1272.2 791.6C1274.7 791.6 1277.0 795.3 1280.0 805.0C1283.0 814.7 1285.0 837.5 1290.0 850.0C1295.0 862.5 1300.0 878.0 1310.0 880.0C1320.0 882.0 1335.0 866.7 1350.0 862.0C1365.0 857.3 1385.0 854.7 1400.0 852.0C1415.0 849.3 1430.5 847.9 1440.0 846.0C1449.5 844.1 1452.0 842.9 1457.3 840.7C1462.6 838.5 1467.7 836.3 1471.6 832.6C1475.5 828.9 1477.5 823.1 1480.5 818.3C1483.5 813.5 1486.8 809.1 1489.5 804.0C1492.2 798.9 1494.4 791.2 1496.6 787.9C1498.8 784.6 1500.5 782.8 1502.9 784.3C1505.3 785.8 1508.5 792.0 1511.0 796.8C1513.5 801.6 1516.2 809.4 1518.1 813.0C1520.0 816.6 1520.9 818.6 1522.6 818.3C1524.2 818.0 1526.5 816.1 1528.0 811.0C1529.5 805.9 1530.5 794.7 1531.5 787.9C1532.5 781.1 1533.2 775.0 1534.2 770.0C1535.2 765.0 1536.2 760.6 1537.5 758.0C1538.8 755.4 1540.1 753.9 1541.7 754.2C1543.3 754.5 1545.2 757.4 1547.0 760.0C1548.8 762.6 1550.4 765.3 1552.7 770.0C1555.0 774.7 1558.3 781.4 1560.7 788.0C1563.1 794.6 1565.3 802.0 1567.0 809.4C1568.7 816.8 1569.4 827.2 1570.6 832.6C1571.8 838.0 1572.7 839.9 1574.0 842.0C1575.3 844.1 1576.3 845.4 1578.6 845.2C1580.9 845.0 1584.7 842.2 1588.0 841.0C1591.3 839.8 1594.8 837.8 1598.3 838.0C1601.8 838.2 1605.4 840.7 1609.0 842.5C1612.6 844.3 1617.3 848.0 1619.8 848.7C1622.3 849.5 1622.8 848.2 1624.0 847.0C1625.2 845.8 1626.1 847.0 1627.0 841.6C1627.9 836.2 1628.1 822.8 1629.6 814.7C1631.1 806.7 1633.1 799.0 1635.9 793.3C1638.7 787.6 1643.0 783.5 1646.6 780.7C1650.2 778.0 1654.6 776.5 1657.4 776.8C1660.2 777.1 1662.0 777.7 1663.6 782.5C1665.2 787.3 1666.2 798.0 1667.2 805.8C1668.2 813.5 1669.0 824.0 1669.9 829.0C1670.8 834.0 1671.5 834.5 1672.5 836.0C1673.5 837.5 1673.7 838.1 1676.2 837.7C1678.8 837.3 1684.5 834.7 1687.8 833.5C1691.1 832.3 1694.6 831.0 1695.9 830.5" fill="none" stroke="#75e8c4" stroke-width="3" stroke-linejoin="round"/>
<path d="M1560.7 911.0C1561.9 912.0 1565.6 915.2 1568.0 917.0C1570.4 918.8 1573.1 920.7 1575.0 921.5C1576.9 922.3 1578.0 922.4 1579.5 922.0C1581.0 921.6 1582.7 920.5 1584.0 919.0C1585.3 917.5 1586.4 916.4 1587.6 913.0C1588.8 909.6 1590.2 902.1 1591.2 898.9C1592.2 895.7 1592.6 895.1 1593.5 894.0C1594.4 892.9 1594.9 892.5 1596.5 892.2C1598.1 891.9 1600.9 891.9 1603.0 892.0C1605.1 892.1 1607.1 892.2 1609.0 892.6C1610.9 893.0 1612.7 893.6 1614.5 894.5C1616.3 895.4 1617.4 895.2 1619.8 898.0C1622.2 900.8 1626.2 906.5 1628.7 911.4C1631.2 916.3 1633.5 923.2 1635.0 927.5C1636.5 931.8 1637.5 935.7 1638.0 937.3" fill="none" stroke="#ffd858" stroke-width="3" stroke-linejoin="round"/>
<path d="M1118.0 700.0C1119.3 690.0 1123.7 654.4 1126.0 640.0C1128.3 625.6 1130.6 619.8 1132.0 613.5C1133.4 607.2 1133.5 604.7 1134.5 602.0C1135.5 599.3 1136.7 596.6 1137.8 597.3C1138.9 598.0 1140.0 600.7 1141.0 606.0C1142.0 611.3 1142.9 617.0 1143.7 629.0C1144.5 641.0 1144.7 659.3 1145.7 678.0C1146.7 696.7 1148.4 727.3 1149.6 741.0C1150.8 754.7 1151.8 756.0 1153.0 760.0C1154.2 764.0 1155.0 765.5 1156.5 765.0C1158.0 764.5 1160.1 760.0 1162.0 757.0C1163.9 754.0 1165.8 749.4 1168.0 747.0C1170.2 744.6 1172.9 743.1 1175.2 742.4C1177.5 741.6 1179.9 742.2 1182.0 742.5C1184.1 742.8 1185.8 742.6 1188.0 744.0C1190.2 745.4 1193.2 748.0 1194.9 751.0C1196.6 754.0 1197.0 757.7 1198.0 762.0C1199.0 766.3 1199.8 765.5 1200.8 777.0C1201.8 788.5 1203.0 813.5 1204.0 831.0C1205.0 848.5 1205.6 871.0 1206.5 882.0C1207.4 893.0 1208.2 893.6 1209.5 897.0C1210.8 900.4 1212.5 902.1 1214.2 902.3C1216.0 902.5 1217.9 899.7 1220.0 898.0C1222.1 896.3 1224.6 893.8 1227.0 892.0C1229.4 890.2 1232.7 887.8 1234.6 887.4C1236.5 887.0 1237.2 888.1 1238.5 889.5C1239.8 890.9 1240.5 891.8 1242.2 895.5C1243.9 899.2 1246.7 906.8 1248.5 911.7C1250.3 916.6 1251.1 920.3 1253.0 925.0C1254.9 929.7 1256.8 936.7 1260.0 940.0C1263.2 943.3 1270.0 944.2 1272.0 945.0" fill="none" stroke="#468d91" stroke-width="3" stroke-linejoin="round"/>
<path d="M1676.2 937.3C1679.5 927.2 1692.6 886.9 1695.9 876.8" fill="none" stroke="#70dff8" stroke-width="3" stroke-linejoin="round"/>
<path d="M1214.5 807.0C1214.7 805.8 1214.8 803.3 1215.6 800.0C1216.4 796.7 1218.1 791.2 1219.5 787.0C1220.9 782.8 1222.8 778.2 1224.2 774.5C1225.6 770.8 1227.0 767.2 1228.1 764.7C1229.2 762.2 1230.0 760.8 1231.0 759.5C1232.0 758.2 1233.2 757.1 1234.3 757.0C1235.4 756.9 1236.5 757.7 1237.5 759.0C1238.5 760.3 1239.5 762.1 1240.4 764.7C1241.3 767.3 1242.0 770.6 1242.9 774.5C1243.8 778.4 1245.1 783.8 1246.0 788.0C1246.9 792.2 1247.3 794.7 1248.3 800.0C1249.3 805.3 1249.7 808.3 1252.0 820.0C1254.3 831.7 1258.5 856.7 1262.0 870.0C1265.5 883.3 1268.0 894.2 1273.0 900.0C1278.0 905.8 1285.7 908.3 1292.0 905.0C1298.3 901.7 1305.5 891.7 1311.0 880.0C1316.5 868.3 1321.1 849.4 1325.0 835.0C1328.9 820.6 1332.0 805.0 1334.5 793.7C1337.0 782.4 1338.6 772.9 1340.2 767.3C1341.8 761.7 1342.6 761.7 1344.0 760.0C1345.4 758.3 1347.3 757.2 1348.8 757.2C1350.3 757.2 1351.8 758.6 1353.2 760.3C1354.6 762.0 1355.8 764.4 1357.2 767.5C1358.6 770.6 1360.3 775.5 1361.7 778.7C1363.1 781.9 1364.3 784.0 1365.6 786.5C1366.9 789.0 1367.9 790.5 1369.5 793.7C1371.1 797.0 1372.8 799.1 1375.0 806.0C1377.2 812.9 1380.2 824.3 1383.0 835.0C1385.8 845.7 1388.3 862.5 1392.0 870.0C1395.7 877.5 1401.7 883.3 1405.0 880.0C1408.3 876.7 1410.3 864.4 1412.0 850.0C1413.7 835.6 1414.4 810.4 1415.3 793.7C1416.2 777.0 1416.5 760.5 1417.5 750.0C1418.5 739.5 1419.6 734.7 1421.0 730.8C1422.4 726.9 1424.2 726.8 1426.0 726.5C1427.8 726.2 1429.6 727.5 1432.0 729.0C1434.4 730.5 1436.9 732.1 1440.4 735.8C1443.9 739.5 1449.0 745.7 1453.1 751.2C1457.2 756.7 1461.0 762.8 1465.0 769.0C1469.0 775.2 1474.1 784.5 1476.8 788.6C1479.5 792.7 1479.7 792.4 1481.0 793.5C1482.3 794.6 1483.4 795.2 1484.6 795.0C1485.8 794.8 1486.8 794.2 1488.0 792.5C1489.2 790.8 1490.4 790.6 1491.5 784.7C1492.6 778.8 1493.5 768.1 1494.5 757.0C1495.5 745.9 1496.2 728.3 1497.4 717.8C1498.6 707.3 1499.6 703.9 1501.4 694.0C1503.2 684.1 1505.9 671.1 1508.2 658.7C1510.5 646.3 1513.4 627.8 1515.1 619.4C1516.8 611.0 1517.3 611.0 1518.5 608.5C1519.7 606.0 1520.9 604.7 1522.0 604.6C1523.1 604.5 1524.0 605.5 1525.0 608.0C1526.0 610.5 1526.9 609.3 1527.9 619.4C1528.9 629.5 1529.8 654.2 1530.9 668.6C1532.1 683.0 1533.7 698.1 1534.8 706.0C1535.9 713.9 1536.5 713.8 1537.5 716.0C1538.5 718.2 1539.5 719.0 1540.7 719.3C1542.0 719.5 1543.2 718.7 1545.0 717.5C1546.8 716.3 1549.2 714.8 1551.5 711.9C1553.8 709.0 1556.7 706.5 1559.0 700.0C1561.3 693.5 1563.6 682.6 1565.2 673.0C1566.8 663.4 1567.8 652.7 1568.8 642.6C1569.8 632.5 1570.5 618.8 1571.5 612.2C1572.5 605.6 1573.3 604.9 1574.5 603.0C1575.7 601.1 1577.2 600.7 1578.6 601.0C1580.0 601.3 1581.2 602.7 1583.0 605.0C1584.8 607.3 1587.4 611.9 1589.4 615.0C1591.4 618.1 1593.3 621.3 1595.0 623.5C1596.7 625.7 1598.5 627.6 1599.8 628.0C1601.0 628.4 1601.7 627.4 1602.5 626.0C1603.3 624.6 1604.0 622.1 1604.6 619.4C1605.2 616.7 1605.8 613.6 1606.3 610.0C1606.8 606.4 1606.9 603.0 1607.3 598.0C1607.7 593.0 1608.2 597.9 1608.7 580.0C1609.2 562.1 1609.2 524.2 1610.1 490.5C1610.9 456.8 1611.9 412.2 1613.8 377.8C1615.7 343.4 1618.6 308.9 1621.4 283.9C1624.2 258.9 1628.5 239.2 1630.8 227.6C1633.1 216.0 1633.8 217.2 1635.0 214.5C1636.2 211.8 1637.3 210.7 1638.3 211.4C1639.3 212.2 1640.1 213.2 1641.0 219.0C1641.9 224.8 1642.7 226.1 1643.9 246.3C1645.1 266.5 1647.2 308.9 1648.4 340.2C1649.7 371.5 1650.5 412.0 1651.4 434.0C1652.3 456.0 1653.1 464.0 1654.0 472.0C1654.9 480.0 1656.0 482.5 1657.0 482.2C1658.0 481.9 1659.0 478.0 1660.0 470.0C1661.0 462.0 1661.3 452.5 1662.7 434.0C1664.1 415.5 1666.7 377.3 1668.3 359.0C1669.9 340.7 1671.1 332.0 1672.5 324.0C1673.9 316.0 1675.3 311.3 1676.6 311.0C1677.8 310.7 1678.9 315.9 1680.0 322.0C1681.1 328.1 1681.5 322.8 1683.3 347.7C1685.1 372.6 1688.7 432.9 1690.8 471.7C1692.9 510.5 1694.9 562.5 1695.7 580.6" fill="none" stroke="#f0505b" stroke-width="2" stroke-linejoin="round"/>
</g>
<path d="M1234.500 143V945" stroke="#b4b9c4" stroke-width="1" stroke-dasharray="4 2" fill="none"/>
<circle cx="1234.500" cy="757.5" r="3.200" fill="#fff" stroke="#f0505b" stroke-width="2.200"/>
<path d="M1234.500 755.0V760.0" stroke="#a9aeb8" stroke-width="1" fill="none"/>
<circle cx="1234.500" cy="841.5" r="3.200" fill="#fff" stroke="#75e8c4" stroke-width="2.200"/>
<path d="M1234.500 839.0V844.0" stroke="#a9aeb8" stroke-width="1" fill="none"/>
<circle cx="1234.500" cy="887.5" r="3.200" fill="#fff" stroke="#468d91" stroke-width="2.200"/>
<path d="M1234.500 885.0V890.0" stroke="#a9aeb8" stroke-width="1" fill="none"/>
<path d="M426 945.500H1697" stroke="#6e7079" stroke-width="1" fill="none"/>
<path d="M1234.5 945V950.500" stroke="#6e7079" stroke-width="1" fill="none"/>
<path d="M1465.5 945V950.500" stroke="#6e7079" stroke-width="1" fill="none"/>
<path d="M423 166.5H426" stroke="#6e7079" stroke-width="1" fill="none"/>
<path d="M423 189.5H426" stroke="#6e7079" stroke-width="1" fill="none"/>
<path d="M423 211.5H426" stroke="#6e7079" stroke-width="1" fill="none"/>
<path d="M423 234.5H426" stroke="#6e7079" stroke-width="1" fill="none"/>
<path d="M423 280.5H426" stroke="#6e7079" stroke-width="1" fill="none"/>
<path d="M423 303.5H426" stroke="#6e7079" stroke-width="1" fill="none"/>
<path d="M423 326.5H426" stroke="#6e7079" stroke-width="1" fill="none"/>
<path d="M423 349.5H426" stroke="#6e7079" stroke-width="1" fill="none"/>
<path d="M423 395.5H426" stroke="#6e7079" stroke-width="1" fill="none"/>
<path d="M423 418.5H426" stroke="#6e7079" stroke-width="1" fill="none"/>
<path d="M423 441.5H426" stroke="#6e7079" stroke-width="1" fill="none"/>
<path d="M423 464.5H426" stroke="#6e7079" stroke-width="1" fill="none"/>
<path d="M423 509.5H426" stroke="#6e7079" stroke-width="1" fill="none"/>
<path d="M423 532.5H426" stroke="#6e7079" stroke-width="1" fill="none"/>
<path d="M423 555.5H426" stroke="#6e7079" stroke-width="1" fill="none"/>
<path d="M423 578.5H426" stroke="#6e7079" stroke-width="1" fill="none"/>
<path d="M423 624.5H426" stroke="#6e7079" stroke-width="1" fill="none"/>
<path d="M423 647.5H426" stroke="#6e7079" stroke-width="1" fill="none"/>
<path d="M423 670.5H426" stroke="#6e7079" stroke-width="1" fill="none"/>
<path d="M423 693.5H426" stroke="#6e7079" stroke-width="1" fill="none"/>
<path d="M423 739.5H426" stroke="#6e7079" stroke-width="1" fill="none"/>
<path d="M423 761.5H426" stroke="#6e7079" stroke-width="1" fill="none"/>
<path d="M423 784.5H426" stroke="#6e7079" stroke-width="1" fill="none"/>
<path d="M423 807.5H426" stroke="#6e7079" stroke-width="1" fill="none"/>
<path d="M423 853.5H426" stroke="#6e7079" stroke-width="1" fill="none"/>
<path d="M423 876.5H426" stroke="#6e7079" stroke-width="1" fill="none"/>
<path d="M423 899.5H426" stroke="#6e7079" stroke-width="1" fill="none"/>
<path d="M423 922.5H426" stroke="#6e7079" stroke-width="1" fill="none"/>
<text x="417.500" y="146.9" text-anchor="end" fill="#6e7079">210</text>
<text x="417.500" y="261.5" text-anchor="end" fill="#6e7079">180</text>
<text x="417.500" y="376.0" text-anchor="end" fill="#6e7079">150</text>
<text x="417.500" y="490.6" text-anchor="end" fill="#6e7079">120</text>
<text x="417.500" y="605.2" text-anchor="end" fill="#6e7079">90</text>
<text x="417.500" y="719.8" text-anchor="end" fill="#6e7079">60</text>
<text x="417.500" y="834.3" text-anchor="end" fill="#6e7079">30</text>
<text x="417.500" y="948.9" text-anchor="end" fill="#6e7079">0</text>
<text x="1234.5" y="962.700" text-anchor="middle" fill="#6e7079">2019</text>
<text x="1465.5" y="962.700" text-anchor="middle" fill="#6e7079">2020</text>
<text x="1003.5" y="962.700" text-anchor="middle" fill="#6e7079">2018</text>
<text x="772.5" y="962.700" text-anchor="middle" fill="#6e7079">2017</text>
<text x="541.5" y="962.700" text-anchor="middle" fill="#6e7079">2016</text>
</svg>
<div class="t" style="left:679.5px;top:114px;font-size:12px;color:#333;">Airbnb</div>
<div class="t" style="left:754.3px;top:114px;font-size:12px;color:#333;">Dropbox</div>
<div class="t" style="left:839.3px;top:114px;font-size:12px;color:#333;">Lyft</div>
<div class="t" style="left:898.5px;top:114px;font-size:12px;color:#333;">Other</div>
<div class="t" style="left:968.7px;top:114px;font-size:12px;color:#333;">Preset</div>
<div class="t" style="left:1043.7px;top:114px;font-size:12px;color:#333;">10 PR per day</div>
<div class="t" style="left:1163.7px;top:114px;font-size:12px;color:#333;">1 PR Every other day</div>
<div class="t" style="left:1317.8px;top:114px;font-size:12px;color:#333;">More than 3 PR per day</div>
<svg class="abs" style="left:649.1px;top:117.500px" width="25" height="14" viewBox="0 0 25 14"><path d="M0 7H25" stroke="#6bd3b3" stroke-width="2"/><circle cx="12.500" cy="7" r="5.500" fill="#fff" stroke="#6bd3b3" stroke-width="2"/></svg><svg class="abs" style="left:723.9px;top:117.500px" width="25" height="14" viewBox="0 0 25 14"><path d="M0 7H25" stroke="#fcc550" stroke-width="2"/><circle cx="12.500" cy="7" r="5.500" fill="#fff" stroke="#fcc550" stroke-width="2"/></svg><svg class="abs" style="left:808.9px;top:117.500px" width="25" height="14" viewBox="0 0 25 14"><path d="M0 7H25" stroke="#408184" stroke-width="2"/><circle cx="12.500" cy="7" r="5.500" fill="#fff" stroke="#408184" stroke-width="2"/></svg><svg class="abs" style="left:868.1px;top:117.500px" width="25" height="14" viewBox="0 0 25 14"><path d="M0 7H25" stroke="#66cbe2" stroke-width="2"/><circle cx="12.500" cy="7" r="5.500" fill="#fff" stroke="#66cbe2" stroke-width="2"/></svg><svg class="abs" style="left:938.3px;top:117.500px" width="25" height="14" viewBox="0 0 25 14"><path d="M0 7H25" stroke="#ee5960" stroke-width="2"/><circle cx="12.500" cy="7" r="5.500" fill="#fff" stroke="#ee5960" stroke-width="2"/></svg><svg class="abs" style="left:1013.3px;top:117.500px" width="25" height="14" viewBox="0 0 25 14"><path d="M0 7H25" stroke="#fde2a7" stroke-width="2"/><circle cx="12.500" cy="7" r="5.500" fill="#fff" stroke="#fde2a7" stroke-width="2"/></svg><svg class="abs" style="left:1133.3px;top:117.500px" width="25" height="14" viewBox="0 0 25 14"><path d="M0 7H25" stroke="#ee5960" stroke-width="2"/><circle cx="12.500" cy="7" r="5.500" fill="#fff" stroke="#ee5960" stroke-width="2"/></svg><svg class="abs" style="left:1287.4px;top:117.500px" width="25" height="14" viewBox="0 0 25 14"><path d="M0 7H25" stroke="#6bd3b3" stroke-width="2"/><circle cx="12.500" cy="7" r="5.500" fill="#fff" stroke="#6bd3b3" stroke-width="2"/></svg>
<div class="t" style="left:379px;top:71px;font-size:24px;color:#323232;letter-spacing:0.157px;">PR Merged</div>
<svg class="abs" style="left:516px;top:72px" width="17" height="17" viewBox="0 0 17 17"><path d="M8.500 1.600l2.100 4.500 4.900.6-3.600 3.400.9 4.900-4.300-2.400-4.300 2.400.9-4.900L1.500 6.700l4.900-.6z" fill="none" stroke="#a6a6a6" stroke-width="1.400" stroke-linejoin="round"/></svg>
<svg class="abs" style="left:543px;top:73px" width="16" height="15" viewBox="0 0 16 15"><path d="M11.500 8.800v2.700a1.600 1.600 0 0 1-1.600 1.600H3.100a1.600 1.600 0 0 1-1.600-1.600V4.800a1.600 1.600 0 0 1 1.600-1.600h5.400" fill="none" stroke="#323232" stroke-width="1.300"/><path d="M6.300 9.700l.5-2.300 6-6 1.800 1.800-6 6z" fill="#323232"/></svg>
<div class="abs" style="left:563px;top:70px;width:60px;height:21px;border-radius:10.500px;background:#e0ac03"></div>
<div class="t" style="left:573px;top:71px;font-size:12px;color:#fff;letter-spacing:0.353px;">Altered</div>
<div class="abs" style="left:1310px;top:69px;width:66px;height:23px;border-radius:11.500px;background:#f0f0f0"></div>
<div class="t" style="left:1320px;top:71px;font-size:13px;color:#484848;letter-spacing:-0.076px;">67 rows</div>
<div class="abs" style="left:1380px;top:69px;width:91px;height:23px;border-radius:11.500px;background:#5ac189"></div>
<div class="t" style="left:1390.3px;top:71px;font-size:13px;color:#fff;letter-spacing:-0.335px;">00:00:01.51</div>
<div class="abs" style="left:1475px;top:66px;width:241px;height:30px;border:1px solid #dcdcdc;border-radius:4px;background:#fff"></div>
<div class="abs" style="left:1510px;top:66px;width:1px;height:30px;background:#dcdcdc"></div>
<div class="abs" style="left:1548px;top:66px;width:1px;height:30px;background:#dcdcdc"></div>
<div class="abs" style="left:1618px;top:66px;width:1px;height:30px;background:#dcdcdc"></div>
<div class="abs" style="left:1680px;top:66px;width:1px;height:30px;background:#dcdcdc"></div>
<svg class="abs" style="left:1484px;top:74px" width="15" height="14" viewBox="0 0 15 14" fill="none" stroke="#323232" stroke-width="1.400"><circle cx="4.800" cy="4.600" r="2.300"/><circle cx="10.200" cy="9.400" r="2.300"/><path d="M6.400 6.100l2.200 1.800"/></svg>
<svg class="abs" style="left:1521px;top:76px" width="14" height="10" viewBox="0 0 14 10" fill="none" stroke="#484848" stroke-width="1.100"><path d="M3.800 1.500L1 5l2.800 3.500M10.200 1.500L13 5l-2.800 3.500M8.200 0.800L5.800 9.200"/></svg>
<svg class="abs" style="left:1559px;top:74px" width="10" height="13" viewBox="0 0 10 13" fill="none" stroke="#484848" stroke-width="1"><path d="M0.700 1.700a1 1 0 0 1 1-1h4.500l3.100 3.100v7.500a1 1 0 0 1-1 1H1.700a1 1 0 0 1-1-1zM6.200 0.700v3.100h3.100"/><path d="M2.800 7h4.400M2.800 9h4.400" stroke-width="1.100"/></svg>
<svg class="abs" style="left:1629px;top:74px" width="10" height="13" viewBox="0 0 10 13" fill="none" stroke="#484848" stroke-width="1"><path d="M0.700 1.700a1 1 0 0 1 1-1h4.500l3.100 3.100v7.500a1 1 0 0 1-1 1H1.700a1 1 0 0 1-1-1zM6.200 0.700v3.100h3.100"/><path d="M2.800 7h4.400M2.800 9h4.400" stroke-width="1.100"/></svg>
<div class="t" style="left:1572.3px;top:71px;font-size:12px;color:#484848;letter-spacing:-0.049px;">.JSON</div>
<div class="t" style="left:1642.7px;top:71px;font-size:12px;color:#484848;letter-spacing:-0.254px;">.CSV</div>
<svg class="abs" style="left:1690.500px;top:75.500px" width="12" height="11" viewBox="0 0 12 11"><path d="M0.500 1.500h11M0.500 5.500h11M0.500 9.500h11" stroke="#323232" stroke-width="1.600"/></svg>
<div class="abs" style="left:1732px;top:49px;width:14px;height:1036px;background:#fafafa;border-left:1px solid #e8e8e8;border-right:1px solid #e8e8e8"></div>
<div class="abs" style="left:1735px;top:52px;width:8px;height:1028px;background:#c1c1c1;border-radius:4px"></div>
<div class="abs" style="left:353px;top:1084px;width:1393px;height:1px;background:#ececec"></div>
<div class="abs" style="left:1249px;top:794px;width:208px;height:169.500px;background:#fff;border-radius:4px;box-shadow:1px 2px 10px rgba(0,0,0,.2);font-size:14px;color:#666"></div>
<div class="t" style="left:1260.5px;top:805px;font-size:14px;color:#666;">2019</div>
<div class="abs" style="left:1260px;top:830.7px;width:10px;height:10px;border-radius:5px;background:#6bd3b3"></div>
<div class="t" style="left:1274.8px;top:826px;font-size:14px;color:#666;">Airbnb: 27</div>
<div class="abs" style="left:1260px;top:851.7px;width:10px;height:10px;border-radius:5px;background:#408184"></div>
<div class="t" style="left:1274.8px;top:847px;font-size:14px;color:#666;">Lyft: 15</div>
<div class="abs" style="left:1260px;top:872.7px;width:10px;height:10px;border-radius:5px;background:#ee5960"></div>
<div class="t" style="left:1274.8px;top:868px;font-size:14px;color:#666;">Preset: 49</div>
<div class="abs" style="left:1260px;top:893.7px;width:10px;height:10px;border-radius:5px;background:#fde2a7"></div>
<div class="t" style="left:1274.8px;top:889px;font-size:14px;color:#666;">10 PR per day : 30</div>
<div class="abs" style="left:1260px;top:914.7px;width:10px;height:10px;border-radius:5px;background:#ee5960"></div>
<div class="t" style="left:1274.8px;top:910px;font-size:14px;color:#666;">1 PR Every other day: 15</div>
<div class="abs" style="left:1260px;top:935.7px;width:10px;height:10px;border-radius:5px;background:#6bd3b3"></div>
<div class="t" style="left:1274.8px;top:931px;font-size:14px;color:#666;">More than 3 PR per day: 90</div>
<svg class="abs" style="left:1217.500px;top:768px" width="24" height="26" viewBox="0 0 24 26"><g transform="translate(2.500 3.500) rotate(-17 9 10) scale(1.120)"><path d="M5.200 10.500V3.200a1.300 1.300 0 0 1 2.600 0v4.600l1-.2a1.200 1.200 0 0 1 1.500.6l.6-.1a1.200 1.200 0 0 1 1.500.7l.5-.1a1.300 1.300 0 0 1 1.500 1.300v3.200c0 2.500-1.200 4.800-4.400 4.800-2.700 0-3.700-1.200-4.700-3l-2-3.600c-.4-.8.600-1.600 1.300-.9z" fill="#fff" stroke="#1a1a1a" stroke-width="1.200" stroke-linejoin="round"/><path d="M8.200 12v3.200M10.300 12v3.200M12.300 12v3.200" stroke="#1a1a1a" stroke-width="0.900"/></g></svg>
<div class="abs" style="left:336px;top:617px;width:796px;height:520px;background:#fff;border-radius:2px;box-shadow:0 3px 6px -4px rgba(0,0,0,.12),0 6px 16px 0 rgba(0,0,0,.08),0 9px 28px 8px rgba(0,0,0,.05)"></div>
<div class="abs" style="left:331.500px;top:864.500px;width:9px;height:9px;background:#fff;transform:rotate(45deg);box-shadow:-2px 2px 5px rgba(0,0,0,.06)"></div>
<div class="abs" style="left:336px;top:649px;width:796px;height:1px;background:#f0f0f0"></div>
<div class="t" style="left:352.4px;top:623px;font-size:14px;color:#1f1f1f;letter-spacing:0.485px;-webkit-text-stroke:0.3px #1f1f1f;">Edit Annotation Layer</div>
<div class="t" style="left:352.4px;top:662px;font-size:14px;font-weight:bold;color:#1f1f1f;letter-spacing:0.12px;">Layer Configuration</div>
<svg class="abs" style="left:495.9px;top:666.1px" width="11.8" height="11.8" viewBox="0 0 10 10"><circle cx="5" cy="5" r="5" fill="#999"/><rect x="4.200" y="4.200" width="1.700" height="3.600" fill="#fff"/><rect x="3.500" y="4.200" width="1.500" height="1" fill="#fff"/><rect x="3.400" y="7.200" width="3.300" height="1" fill="#fff"/><rect x="4.100" y="1.800" width="1.800" height="1.600" fill="#fff"/></svg>
<svg class="abs" style="left:511.7px;top:667px" width="14" height="11" viewBox="0 0 14 11"><path d="M0.860 5.330L2.570 3.270L5.540 6L11.360 0.300L13.190 2.130L5.540 10Z" fill="#20a7c9"/></svg>
<div class="t" style="left:589.4px;top:662px;font-size:14px;font-weight:bold;color:#1f1f1f;letter-spacing:0.14px;">Annotation Slice Configuration</div>
<svg class="abs" style="left:807.9px;top:666.1px" width="11.8" height="11.8" viewBox="0 0 10 10"><circle cx="5" cy="5" r="5" fill="#999"/><rect x="4.200" y="4.200" width="1.700" height="3.600" fill="#fff"/><rect x="3.500" y="4.200" width="1.500" height="1" fill="#fff"/><rect x="3.400" y="7.200" width="3.300" height="1" fill="#fff"/><rect x="4.100" y="1.800" width="1.800" height="1.600" fill="#fff"/></svg>
<svg class="abs" style="left:824px;top:667px" width="14" height="11" viewBox="0 0 14 11"><path d="M0.860 5.330L2.570 3.270L5.540 6L11.360 0.300L13.190 2.130L5.540 10Z" fill="#20a7c9"/></svg>
<div class="t" style="left:866.3px;top:662px;font-size:14px;font-weight:bold;color:#1f1f1f;letter-spacing:0.132px;">Display configuration</div>
<svg class="abs" style="left:1020px;top:666.1px" width="11.8" height="11.8" viewBox="0 0 10 10"><circle cx="5" cy="5" r="5" fill="#999"/><rect x="4.200" y="4.200" width="1.700" height="3.600" fill="#fff"/><rect x="3.500" y="4.200" width="1.500" height="1" fill="#fff"/><rect x="3.400" y="7.200" width="3.300" height="1" fill="#fff"/><rect x="4.100" y="1.800" width="1.800" height="1.600" fill="#fff"/></svg>
<svg class="abs" style="left:1036.2px;top:667px" width="14" height="11" viewBox="0 0 14 11"><path d="M0.860 5.330L2.570 3.270L5.540 6L11.360 0.300L13.190 2.130L5.540 10Z" fill="#20a7c9"/></svg>
<div class="t" style="left:357.5px;top:690px;font-size:12px;color:#879399;letter-spacing:-0.243px;">NAME</div>
<div class="sel" style="left:357px;top:714px;width:204px;height:34px"></div>
<div class="t" style="left:376.2px;top:722px;font-size:14px;color:#323232;letter-spacing:0.178px;">Event</div>
<div class="abs" style="left:357px;top:767px;width:18px;height:18px;border-radius:3px;background:#fff;border:2px solid #cdcdcd"></div>
<div class="t" style="left:380.5px;top:766px;font-size:12px;color:#879399;letter-spacing:-0.247px;">HIDE LAYER</div>
<div class="t" style="left:357.4px;top:792px;font-size:12px;color:#879399;letter-spacing:-0.078px;">ANNOTATION LAYER TYPE</div>
<svg class="abs" style="left:512.8px;top:796.7px" width="10.2" height="10.2" viewBox="0 0 10 10"><circle cx="5" cy="5" r="5" fill="#949494"/><rect x="4.200" y="4.200" width="1.700" height="3.600" fill="#fff"/><rect x="3.500" y="4.200" width="1.500" height="1" fill="#fff"/><rect x="3.400" y="7.200" width="3.300" height="1" fill="#fff"/><rect x="4.100" y="1.800" width="1.800" height="1.600" fill="#fff"/></svg>
<div class="sel" style="left:357px;top:816px;width:204px;height:34px"><div class="arr" style="right:12.500px"></div></div>
<div class="t" style="left:369.7px;top:823px;font-size:14px;color:#323232;letter-spacing:0.372px;">Interval</div>
<div class="t" style="left:357.4px;top:852px;font-size:12px;color:#879399;letter-spacing:-0.11px;">ANNOTATION SOURCE</div>
<svg class="abs" style="left:490.8px;top:856.7px" width="10.2" height="10.2" viewBox="0 0 10 10"><circle cx="5" cy="5" r="5" fill="#949494"/><rect x="4.200" y="4.200" width="1.700" height="3.600" fill="#fff"/><rect x="3.500" y="4.200" width="1.500" height="1" fill="#fff"/><rect x="3.400" y="7.200" width="3.300" height="1" fill="#fff"/><rect x="4.100" y="1.800" width="1.800" height="1.600" fill="#fff"/></svg>
<div class="sel" style="left:357px;top:876px;width:204px;height:34px"><div class="arr" style="right:12.500px"></div><svg class="x" style="right:32.500px" viewBox="0 0 9 9"><path d="M1.500 1.500l6 6M7.500 1.500l-6 6" stroke="#c8c8c8" stroke-width="1" fill="none"/></svg></div>
<div class="t" style="left:369.7px;top:883px;font-size:14px;color:#323232;letter-spacing:0.326px;">Table</div>
<div class="t" style="left:357.4px;top:912px;font-size:12px;color:#879399;letter-spacing:-0.285px;">CHART</div>
<svg class="abs" style="left:401.7px;top:916.7px" width="10.2" height="10.2" viewBox="0 0 10 10"><circle cx="5" cy="5" r="5" fill="#949494"/><rect x="4.200" y="4.200" width="1.700" height="3.600" fill="#fff"/><rect x="3.500" y="4.200" width="1.500" height="1" fill="#fff"/><rect x="3.400" y="7.200" width="3.300" height="1" fill="#fff"/><rect x="4.100" y="1.800" width="1.800" height="1.600" fill="#fff"/></svg>
<div class="sel" style="left:357px;top:936px;width:204px;height:34px"><div class="arr" style="right:12.500px"></div><svg class="x" style="right:32.500px" viewBox="0 0 9 9"><path d="M1.500 1.500l6 6M7.500 1.500l-6 6" stroke="#c8c8c8" stroke-width="1" fill="none"/></svg></div>
<div class="t" style="left:369.7px;top:943px;font-size:14px;color:#323232;letter-spacing:0.313px;">Max Work Dates</div>
<div class="t" style="left:594.5px;top:690px;font-size:12px;color:#879399;letter-spacing:-0.01px;">INTERVAL START COLUMN</div>
<svg class="abs" style="left:752px;top:694.6px" width="10.2" height="10.2" viewBox="0 0 10 10"><circle cx="5" cy="5" r="5" fill="#949494"/><rect x="4.200" y="4.200" width="1.700" height="3.600" fill="#fff"/><rect x="3.500" y="4.200" width="1.500" height="1" fill="#fff"/><rect x="3.400" y="7.200" width="3.300" height="1" fill="#fff"/><rect x="4.100" y="1.800" width="1.800" height="1.600" fill="#fff"/></svg>
<div class="sel" style="left:594px;top:714px;width:244px;height:34px"><div class="arr" style="right:12.500px"></div></div>
<div class="t" style="left:606.9px;top:721px;font-size:14px;color:#323232;letter-spacing:0.381px;">first_date</div>
<div class="t" style="left:594.5px;top:750px;font-size:12px;color:#879399;letter-spacing:-0.039px;">INTERVAL END COLUMN</div>
<svg class="abs" style="left:738.8px;top:754.5px" width="10.2" height="10.2" viewBox="0 0 10 10"><circle cx="5" cy="5" r="5" fill="#949494"/><rect x="4.200" y="4.200" width="1.700" height="3.600" fill="#fff"/><rect x="3.500" y="4.200" width="1.500" height="1" fill="#fff"/><rect x="3.400" y="7.200" width="3.300" height="1" fill="#fff"/><rect x="4.100" y="1.800" width="1.800" height="1.600" fill="#fff"/></svg>
<div class="sel" style="left:594px;top:774px;width:244px;height:34px"><div class="arr" style="right:12.500px"></div><svg class="x" style="right:32.500px" viewBox="0 0 9 9"><path d="M1.500 1.500l6 6M7.500 1.500l-6 6" stroke="#c8c8c8" stroke-width="1" fill="none"/></svg></div>
<div class="t" style="left:606.9px;top:781px;font-size:14px;color:#323232;letter-spacing:0.23px;">last_date</div>
<div class="t" style="left:594.5px;top:810px;font-size:12px;color:#879399;letter-spacing:-0.018px;">TITLE COLUMN</div>
<svg class="abs" style="left:686.4px;top:814.6px" width="10.2" height="10.2" viewBox="0 0 10 10"><circle cx="5" cy="5" r="5" fill="#949494"/><rect x="4.200" y="4.200" width="1.700" height="3.600" fill="#fff"/><rect x="3.500" y="4.200" width="1.500" height="1" fill="#fff"/><rect x="3.400" y="7.200" width="3.300" height="1" fill="#fff"/><rect x="4.100" y="1.800" width="1.800" height="1.600" fill="#fff"/></svg>
<div class="sel" style="left:594px;top:834px;width:244px;height:34px"><div class="arr" style="right:12.500px"></div><svg class="x" style="right:32.500px" viewBox="0 0 9 9"><path d="M1.500 1.500l6 6M7.500 1.500l-6 6" stroke="#c8c8c8" stroke-width="1" fill="none"/></svg></div>
<div class="t" style="left:606.9px;top:841px;font-size:14px;color:#323232;letter-spacing:0.255px;">org</div>
<div class="t" style="left:594.5px;top:870px;font-size:12px;color:#879399;letter-spacing:-0.129px;">DESCRIPTION COLUMNS</div>
<svg class="abs" style="left:741.3px;top:874.4px" width="10.2" height="10.2" viewBox="0 0 10 10"><circle cx="5" cy="5" r="5" fill="#949494"/><rect x="4.200" y="4.200" width="1.700" height="3.600" fill="#fff"/><rect x="3.500" y="4.200" width="1.500" height="1" fill="#fff"/><rect x="3.400" y="7.200" width="3.300" height="1" fill="#fff"/><rect x="4.100" y="1.800" width="1.800" height="1.600" fill="#fff"/></svg>
<div class="sel" style="left:594px;top:894px;width:244px;height:34px"><div class="arr" style="right:12.500px"></div></div>
<div class="t" style="left:607.2px;top:901px;font-size:14px;color:#7a7a7a;letter-spacing:0.395px;">3 option(s)</div>
<div class="abs" style="left:594px;top:945px;width:18px;height:18px;border-radius:3px;background:#20a7c9"><svg class="abs" style="left:0;top:0" width="18" height="18" viewBox="0 0 18 18"><path d="M3.800 9.200l3.500 3.500 6.900-7.400" fill="none" stroke="#fff" stroke-width="1.900"/></svg></div>
<div class="t" style="left:617.6px;top:944px;font-size:12px;color:#879399;letter-spacing:-0.356px;">OVERRIDE TIME RANGE</div>
<svg class="abs" style="left:755px;top:948.5px" width="10.2" height="10.2" viewBox="0 0 10 10"><circle cx="5" cy="5" r="5" fill="#949494"/><rect x="4.200" y="4.200" width="1.700" height="3.600" fill="#fff"/><rect x="3.500" y="4.200" width="1.500" height="1" fill="#fff"/><rect x="3.400" y="7.200" width="3.300" height="1" fill="#fff"/><rect x="4.100" y="1.800" width="1.800" height="1.600" fill="#fff"/></svg>
<div class="abs" style="left:594px;top:971px;width:18px;height:18px;border-radius:3px;background:#fff;border:2px solid #cdcdcd"></div>
<div class="t" style="left:617.6px;top:970px;font-size:12px;color:#879399;letter-spacing:-0.331px;">OVERRIDE TIME GRAIN</div>
<svg class="abs" style="left:750.9px;top:974.5px" width="10.2" height="10.2" viewBox="0 0 10 10"><circle cx="5" cy="5" r="5" fill="#949494"/><rect x="4.200" y="4.200" width="1.700" height="3.600" fill="#fff"/><rect x="3.500" y="4.200" width="1.500" height="1" fill="#fff"/><rect x="3.400" y="7.200" width="3.300" height="1" fill="#fff"/><rect x="4.100" y="1.800" width="1.800" height="1.600" fill="#fff"/></svg>
<div class="t" style="left:594.5px;top:996px;font-size:12px;color:#879399;letter-spacing:-0.137px;">TIME SHIFT</div>
<svg class="abs" style="left:663.9px;top:1000.6px" width="10.2" height="10.2" viewBox="0 0 10 10"><circle cx="5" cy="5" r="5" fill="#949494"/><rect x="4.200" y="4.200" width="1.700" height="3.600" fill="#fff"/><rect x="3.500" y="4.200" width="1.500" height="1" fill="#fff"/><rect x="3.400" y="7.200" width="3.300" height="1" fill="#fff"/><rect x="4.100" y="1.800" width="1.800" height="1.600" fill="#fff"/></svg>
<div class="sel" style="left:594px;top:1020px;width:244px;height:34px"></div>
<div class="t" style="left:871.5px;top:690px;font-size:12px;color:#879399;letter-spacing:-0.303px;">STYLE</div>
<div class="sel" style="left:871px;top:714px;width:245px;height:34px"><div class="arr" style="right:12.500px"></div></div>
<div class="t" style="left:883.7px;top:721px;font-size:14px;color:#323232;letter-spacing:0.542px;">Dotted</div>
<div class="t" style="left:871.5px;top:750px;font-size:12px;color:#879399;letter-spacing:-0.228px;">OPACITY</div>
<div class="sel" style="left:871px;top:774px;width:245px;height:34px"><div class="arr" style="right:12.500px"></div></div>
<div class="t" style="left:883.7px;top:781px;font-size:14px;color:#7a7a7a;letter-spacing:0.459px;">4 option(s)</div>
<div class="t" style="left:871.5px;top:810px;font-size:12px;color:#879399;letter-spacing:-0.497px;">COLOR</div>
<div class="abs" style="left:871px;top:834px;width:245px;height:73px;background:#fff;border-radius:2px;box-shadow:0 2px 10px rgba(0,0,0,.12),0 2px 5px rgba(0,0,0,.16)"></div>
<div class="abs" style="left:876px;top:839px;width:15px;height:15px;background:#6bd3b3"></div><div class="abs" style="left:896px;top:839px;width:15px;height:15px;background:#fcc550"></div><div class="abs" style="left:916px;top:839px;width:15px;height:15px;background:#408184"></div><div class="abs" style="left:936px;top:839px;width:15px;height:15px;background:#66cbe2"></div><div class="abs" style="left:956px;top:839px;width:15px;height:15px;background:#ee5960"></div><div class="abs" style="left:976px;top:839px;width:15px;height:15px;background:#484e5a"></div><div class="abs" style="left:996px;top:839px;width:15px;height:15px;background:#ff874e"></div><div class="abs" style="left:1016px;top:839px;width:15px;height:15px;background:#03748e"></div><div class="abs" style="left:1036px;top:839px;width:15px;height:15px;background:#c9bbab"></div><div class="abs" style="left:1056px;top:839px;width:15px;height:15px;background:#b17baa"></div><div class="abs" style="left:1076px;top:839px;width:15px;height:15px;background:#b5e9d9"></div><div class="abs" style="left:1096px;top:839px;width:15px;height:15px;background:#fde2a2"></div><div class="abs" style="left:876px;top:859px;width:15px;height:15px;background:#9fbfbf"></div><div class="abs" style="left:896px;top:859px;width:15px;height:15px;background:#b2e5f0"></div><div class="abs" style="left:916px;top:859px;width:15px;height:15px;background:#f6abae"></div><div class="abs" style="left:936px;top:859px;width:15px;height:15px;background:#a3a6ac"></div><div class="abs" style="left:956px;top:859px;width:15px;height:15px;background:#ffc3a6"></div><div class="abs" style="left:976px;top:859px;width:15px;height:15px;background:#81b9c6"></div><div class="abs" style="left:996px;top:859px;width:15px;height:15px;background:#e4dcd5"></div><div class="abs" style="left:1016px;top:859px;width:15px;height:15px;background:#d8bdd5"></div><div class="abs" style="left:1081px;top:844px;width:5px;height:5px;border-radius:2.500px;background:#000"></div><div class="abs" style="left:881px;top:885px;width:9px;height:9px;background:#b5e9d9"></div>
<div class="t" style="left:895px;top:881px;font-size:12px;color:#333;letter-spacing:0.175px;">#B5E9D9</div>
<div class="t" style="left:970.5px;top:881px;font-size:12px;color:#999;">R</div>
<div class="t" style="left:984.6px;top:881px;font-size:12px;color:#333;letter-spacing:-0.844px;">181</div>
<div class="t" style="left:1017.4px;top:881px;font-size:12px;color:#999;">G</div>
<div class="abs" style="left:1031px;top:875px;width:18.500px;height:30px;overflow:hidden">
<div class="t" style="left:0.5px;top:6px;font-size:12px;color:#333;letter-spacing:0.4px;">233</div>
</div>
<div class="t" style="left:1064.8px;top:881px;font-size:12px;color:#999;">B</div>
<div class="t" style="left:1078.5px;top:881px;font-size:12px;color:#333;letter-spacing:-0.41px;">217</div>
<div class="abs" style="left:871px;top:914px;width:245px;height:22px;border-radius:4px;background:#e8f4f9"></div>
<div class="t" style="left:934.4px;top:915px;font-size:12px;font-weight:bold;color:#1a85a0;letter-spacing:0.077px;">AUTOMATIC COLOR</div>
<div class="t" style="left:871.5px;top:945px;font-size:12px;color:#879399;letter-spacing:-0.134px;">LINE WIDTH</div>
<div class="sel" style="left:871px;top:969px;width:245px;height:34px"></div>
<div class="t" style="left:890.7px;top:976px;font-size:14px;color:#323232;">3</div>
<div class="abs" style="left:352px;top:1080px;width:73px;height:30px;border-radius:4px;background:#e8f4f9"></div>
<div class="t" style="left:363.2px;top:1085px;font-size:12px;font-weight:bold;color:#1a85a0;letter-spacing:-0.219px;">REMOVE</div>
<div class="abs" style="left:999px;top:1080px;width:61px;height:30px;border-radius:4px;background:#e8f4f9"></div>
<div class="t" style="left:1010.8px;top:1085px;font-size:12px;font-weight:bold;color:#1a85a0;letter-spacing:-0.221px;">APPLY</div>
<div class="abs" style="left:1076px;top:1080px;width:40px;height:30px;border-radius:4px;background:#1a85a0"></div>
<div class="t" style="left:1087.8px;top:1085px;font-size:12px;font-weight:bold;color:#fff;letter-spacing:-0.45px;">OK</div>
</div>
</body>
</html>
